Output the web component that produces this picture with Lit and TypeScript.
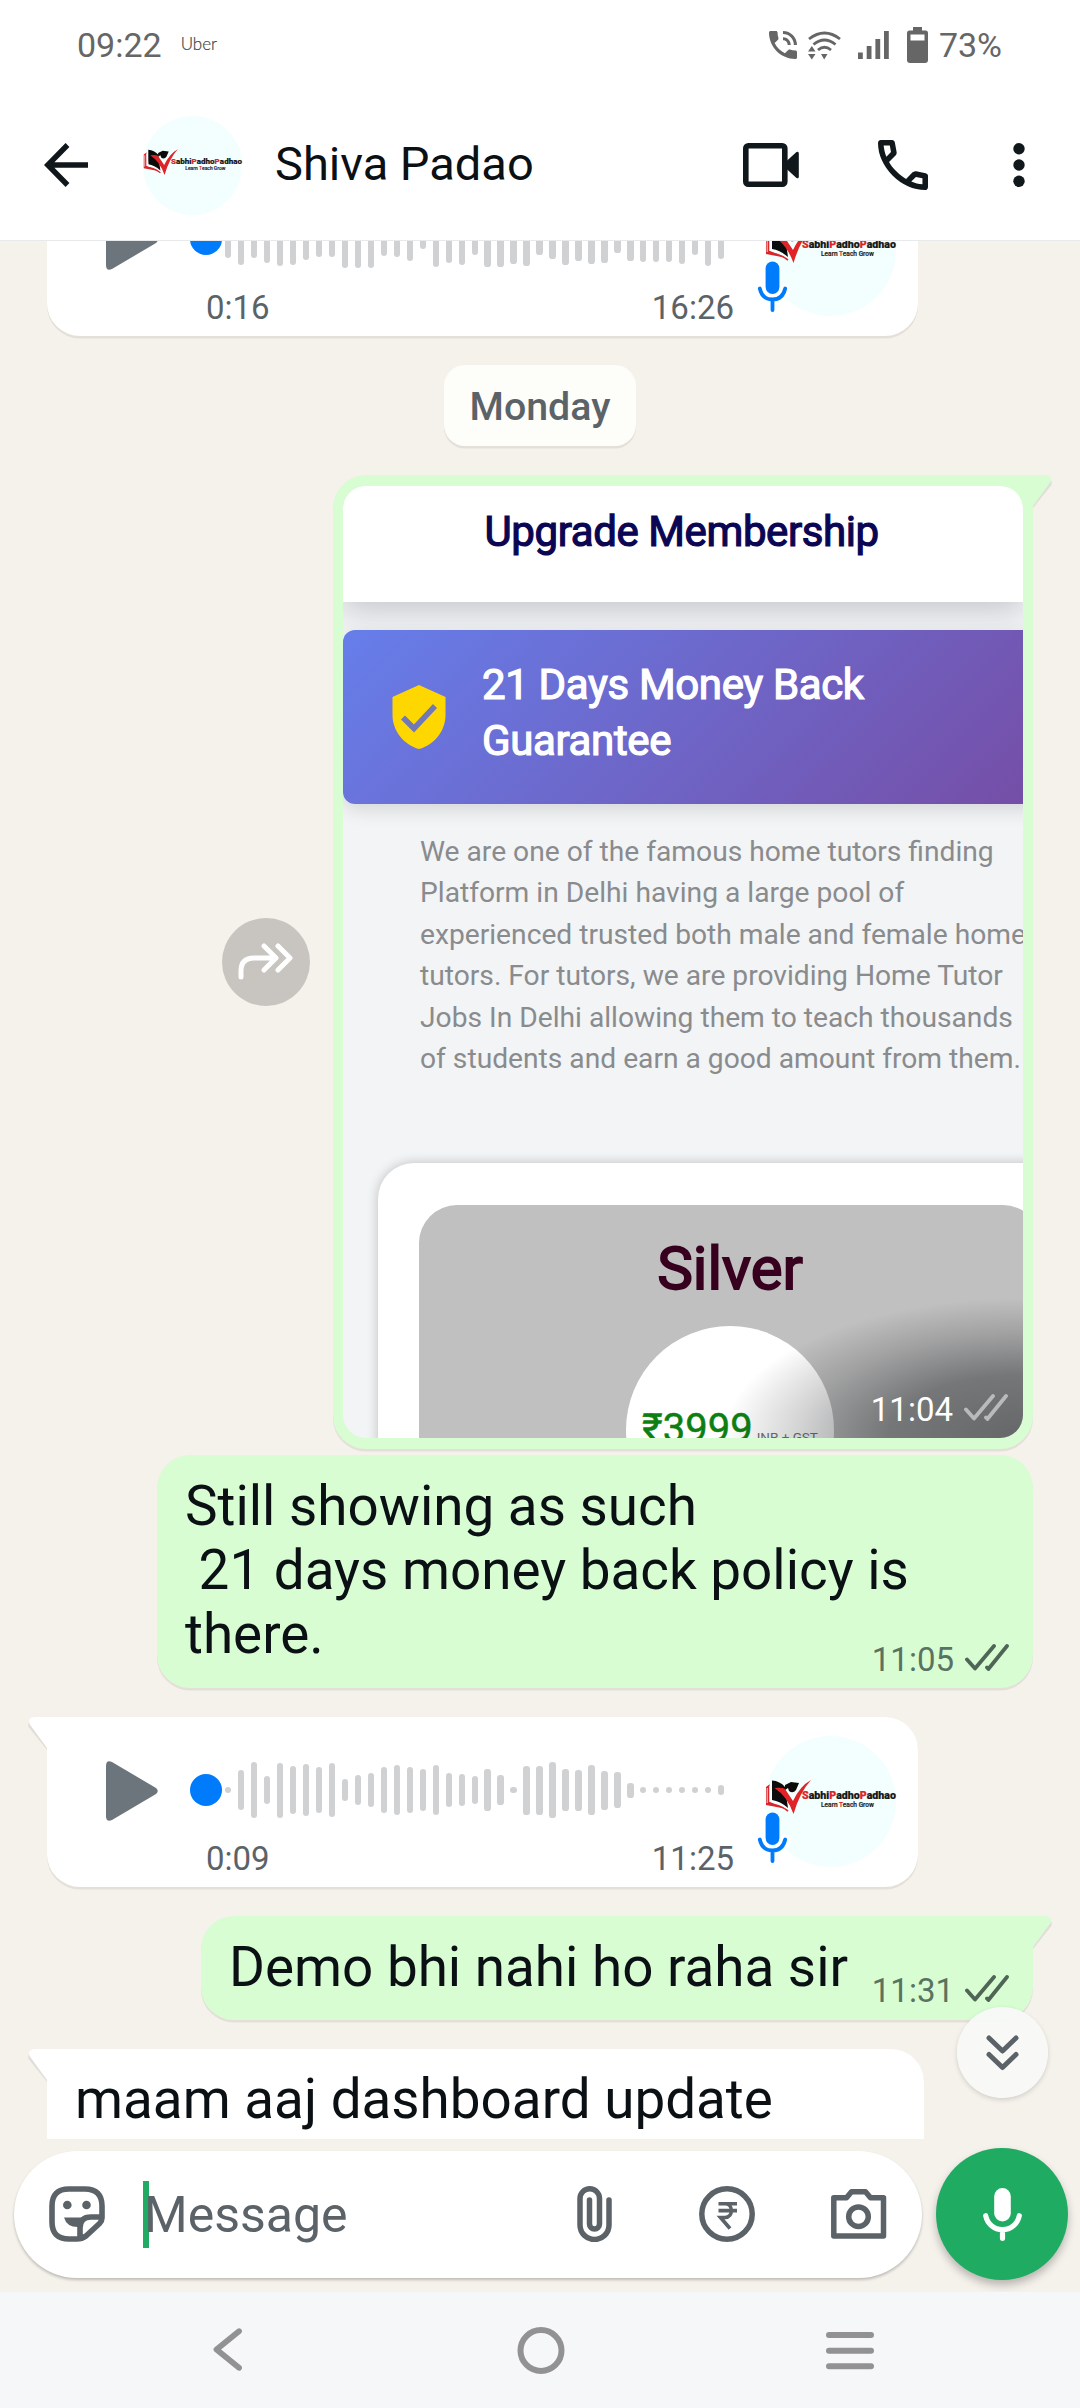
import { LitElement, html, css, svg } from "lit";
import { customElement, property } from "lit/decorators.js";

const DEMO_WAVE = [38, 51, 38, 48, 54, 51, 41, 36, 35, 58, 58, 58, 34, 36, 44, 20, 56, 48, 52, 32, 56, 56, 49, 54, 32, 40, 52, 44, 50, 47, 27, 44, 46, 46, 46, 50, 32, 53, 40];
const REPLY_WAVE = [6, 40, 56, 28, 55, 48, 52, 46, 54, 22, 30, 34, 46, 50, 46, 42, 50, 34, 32, 28, 42, 30, 6, 49, 49, 56, 42, 41, 50, 39, 36, 15, 6, 6, 6, 6, 6, 6, 10];

@customElement("brand-avatar")
export class BrandAvatar extends LitElement {
  static styles = css`
    :host { display: block; }
    .logo { display: block; width: 100%; height: 100%; overflow: visible; }
    .brand { font: 900 10.2px Roboto, "Liberation Sans", sans-serif; fill: #161616; stroke: #161616; stroke-width: 0.2px; }
    .brand .hot { fill: #e02327; stroke: #e02327; }
    .motto { font: 500 7px Roboto, "Liberation Sans", sans-serif; fill: #222; stroke: #222; stroke-width: 0.2px; }
    .motto .hot { fill: #e02327; stroke: #e02327; }
  `;
  render() {
    return html`<svg class="logo" viewBox="0 0 131 131">
      <circle cx="65.5" cy="65.5" r="65.5" fill="#f2fffe" />
      <path d="M1 51 L5 48 V66 L22 73 L1 69 Z" fill="#d9262b" />
      <path d="M2.2 52 V67 M4.6 50 V66" stroke="#fff" stroke-width="0.8" />
      <path d="M7 44.5 Q15 45 20 51 L23 72 Q15 65 7 64 Z" fill="#0b0b0b" />
      <path d="M5 48 L6.6 65 Q15 66.5 23 74" fill="none" stroke="#fff" stroke-width="1" />
      <path d="M3 68 Q14 68 23 75" fill="none" stroke="#d9262b" stroke-width="1.6" />
      <path d="M20 49 L26 46 L34 47 L31 54 Q28 58 24 55 L23 52 L20 54 Z" fill="#0b0b0b" />
      <path d="M9.5 52 Q17 51 20 53 L28 65 Q35 50 46 44 Q35 56 28.5 78 Q22 60 9.5 52 Z" fill="#e02327" />
      <text class="brand" x="37" y="63.3" textLength="94" lengthAdjust="spacingAndGlyphs"><tspan class="hot">S</tspan>abhi<tspan class="hot">P</tspan>adho<tspan class="hot">P</tspan>adhao</text>
      <text class="motto" x="56" y="71" textLength="53" lengthAdjust="spacingAndGlyphs">Learn <tspan class="hot">T</tspan>each Grow</text>
    </svg>`;
  }
}

@customElement("read-ticks")
export class ReadTicks extends LitElement {
  static styles = css`
    :host { display: block; width: 44px; height: 27px; }
    .ticks { display: block; fill: none; stroke: currentColor; stroke-width: 3.8; stroke-linecap: round; stroke-linejoin: round; }
  `;
  render() {
    return html`<svg class="ticks" width="44" height="27" viewBox="0 0 44 27">
      <path d="M2 15.5 L10 24.5 L29 2 M22 23.5 L23.4 25 L42 2" />
    </svg>`;
  }
}

@customElement("voice-note")
export class VoiceNote extends LitElement {
  @property() length = "";
  @property() time = "";
  @property({ attribute: false }) wave: number[] = [];

  static styles = css`
    :host { display: block; width: 871px; height: 170px; color: #5b6368; font: 400 33px/38px Roboto, "Liberation Sans", sans-serif; }
    .note { display: flex; height: 170px; }
    .play { margin: 44px 0 0 59px; width: 52px; height: 60px; }
    .track { width: 535px; margin-left: 32px; }
    .line { display: flex; align-items: center; gap: 6.8px; height: 60px; padding-top: 43px; }
    .knob { width: 32px; height: 32px; border-radius: 50%; background: #007bfc; margin-right: -4px; }
    .bar { width: 6.2px; border-radius: 3.1px; background: #cfd1d3; }
    .times { display: flex; justify-content: space-between; padding: 20px 0 0 16px; width: 544px; box-sizing: border-box; }
    .who { position: relative; width: 131px; height: 131px; margin: 19px 0 0 40px; }
    .mic { position: absolute; left: -11px; top: 72px; overflow: visible; }
  `;
  render() {
    return html`<div class="note">
      <svg class="play" viewBox="0 0 52 60"><path d="M0 5 Q0 -1.5 6 1 L50 27 Q53.500 30 50 33 L6 59 Q0 61.500 0 55 Z" fill="#6b757b" /></svg>
      <div class="track">
        <div class="line">
          <span class="knob"></span>
          ${this.wave.map((h) => html`<span class="bar" style="height:${h}px"></span>`)}
        </div>
        <div class="times"><span>${this.length}</span><span>${this.time}</span></div>
      </div>
      <div class="who">
        <brand-avatar></brand-avatar>
        <svg class="mic" width="37" height="59" viewBox="-4 -4 37 59">
          <g fill="none" stroke="#fff" stroke-linecap="round" stroke-width="11">
            <path d="M14.500 10 V26 M1.800 28 C3.500 35 8.500 38.500 14.500 38.500 S25.500 35 27.200 28 M14.500 40 V49" />
          </g>
          <rect x="7.600" y="0.500" width="13.800" height="32.500" rx="6.900" fill="#007bfc" />
          <path d="M1.800 27.500 C3.500 35 8.500 38.500 14.500 38.500 S25.500 35 27.200 27.500 M14.500 39 V49" fill="none" stroke="#007bfc" stroke-width="3.800" stroke-linecap="round" />
        </svg>
      </div>
    </div>`;
  }
}

@customElement("membership-shot")
export class MembershipShot extends LitElement {
  static styles = css`
    :host { display: block; width: 680px; height: 952px; border-radius: 23px; overflow: hidden; position: relative; background: #f2f4f6; font-family: Roboto, "Liberation Sans", sans-serif; }
    .title { position: relative; height: 116px; box-sizing: border-box; padding: 18.500px 0 0 141.500px; background: #fff; color: #0b0654; font-size: 42px; letter-spacing: -0.4px; line-height: 56px; white-space: nowrap; -webkit-text-stroke: 1.2px #0b0654; box-shadow: 0 8px 30px rgba(60, 65, 70, 0.25); }
    .banner { position: relative; display: flex; align-items: center; width: 740px; height: 174px; margin-top: 28px; box-sizing: border-box; border-radius: 12px; padding: 0 0 0 49px; background: linear-gradient(135deg, #667eea 0%, #764ba2 100%); box-shadow: 0 6px 18px rgba(0, 0, 0, 0.12); color: #fff; }
    .shield { width: 54px; height: 66px; margin: 0 36px 0 0; }
    .promise { font-size: 42px; letter-spacing: -0.35px; line-height: 55.500px; -webkit-text-stroke: 1.2px #fff; white-space: pre; margin-top: -8px; }
    .copy { margin: 27px 0 0 77px; color: #898b8d; font-size: 28.200px; line-height: 41.600px; white-space: pre; }
    .plan { width: 740px; height: 500px; margin: 83px 0 0 35px; box-sizing: border-box; padding: 42px 0 0 41px; border-radius: 36px; background: #fff; box-shadow: 0 0 12px rgba(0, 0, 0, 0.22); }
    .tier { display: flex; flex-direction: column; align-items: center; width: 622px; height: 440px; border-radius: 38px; background: #c0c0c0; }
    .name { margin-top: 28px; color: #38001f; font-size: 60px; line-height: 72px; -webkit-text-stroke: 1.800px #38001f; }
    .price { display: flex; justify-content: center; align-items: baseline; gap: 4px; width: 208px; height: 208px; box-sizing: border-box; margin-top: 21px; padding-top: 78px; border-radius: 50%; background: #fff; color: #0d7f12; font-size: 40px; line-height: 50px; -webkit-text-stroke: 0.500px #0d7f12; white-space: nowrap; }
    .tax { color: #6f6f6f; font-size: 13.500px; -webkit-text-stroke: 0; }
    .scrim { position: absolute; right: 0; bottom: 0; width: 400px; height: 170px; background: radial-gradient(ellipse 300px 140px at 100% 100%, rgba(35, 38, 40, 0.58) 0%, rgba(35, 38, 40, 0.48) 45%, rgba(35, 38, 40, 0.2) 75%, rgba(35, 38, 40, 0) 100%); }
    .meta { position: absolute; right: 15px; bottom: 9px; display: flex; align-items: center; gap: 11px; color: #fff; font-size: 33px; line-height: 38px; }
    .ticks { color: #b9babb; margin-top: -4px; }
  `;
  render() {
    return html`
      <div class="title">Upgrade Membership</div>
      <div class="banner">
        <svg class="shield" viewBox="0 0 54 66">
          <path d="M27 1 L53.500 13 V31 C53.500 47 42 61 27 65 C12 61 0.500 47 0.500 31 V13 Z" fill="#ffd700" />
          <path d="M11 33.500 L22 44.500 L43 22" fill="none" stroke="#7078b8" stroke-width="5.500" />
        </svg>
        <div class="promise">21 Days Money Back
Guarantee</div>
      </div>
      <div class="copy">We are one of the famous home tutors finding
Platform in Delhi having a large pool of
experienced trusted both male and female home
tutors. For tutors, we are providing Home Tutor
Jobs In Delhi allowing them to teach thousands
of students and earn a good amount from them.</div>
      <div class="plan">
        <div class="tier">
          <div class="name">Silver</div>
          <div class="price"><span>₹3999</span><span class="tax">INR + GST</span></div>
        </div>
      </div>
      <div class="scrim"></div>
      <div class="meta"><span>11:04</span><read-ticks class="ticks"></read-ticks></div>
    `;
  }
}

const tail = (side: "left" | "right") => html`<svg class="tail ${side}" width="22" height="34" viewBox="0 0 22 34">
  ${side === "right"
    ? svg`<path d="M2 2.500 H14 Q22 2.500 20.500 10 L2 33 Z" fill="#00000014" /><path d="M0 0 H14 Q21.500 0 19.500 7 L2 31 H0 Z" fill="currentColor" />`
    : svg`<path d="M20 2.500 H8 Q0 2.500 1.500 10 L20 33 Z" fill="#00000014" /><path d="M22 0 H8 Q0.500 0 2.500 7 L20 31 H22 Z" fill="currentColor" />`}
</svg>`;

@customElement("app-root")
export class AppRoot extends LitElement {
  static styles = css`
    :host { display: flex; flex-direction: column; width: 1080px; height: 2408px; overflow: hidden; background: #f5f1eb; font-family: Roboto, "Liberation Sans", sans-serif; color: #0a1014; }
    .status { display: flex; align-items: center; height: 90px; box-sizing: border-box; padding: 0 78px 0 77px; background: #fff; color: #666; font-size: 34px; line-height: 40px; }
    .carrier { margin: -2px auto 0 19px; font: 300 17px/20px Lato, Roboto, sans-serif; color: #444; -webkit-text-stroke: 0.2px #444; }
    .s-call { margin-right: 11px; }
    .s-wifi { margin-right: 17px; }
    .s-bars { margin-right: 18px; }
    .s-batt { margin-right: 11px; }
    .header { display: flex; align-items: center; height: 151px; box-sizing: border-box; padding-left: 44px; background: #fff; border-bottom: 1px solid #e8e9ea; }
    .face { width: 99px; height: 99px; margin: 0 33px 0 55px; }
    .contact { font-size: 47px; line-height: 60px; margin-right: auto; margin-top: -2px; }
    .video { margin-right: 79px; }
    .phone { margin-right: 85px; }
    .more { margin-right: 55px; }
    .chat { position: relative; height: 1898px; overflow: hidden; }
    .list { display: flex; flex-direction: column; gap: 29px; margin-top: -75px; padding: 0 47px; }
    .bubble { position: relative; box-sizing: border-box; border-radius: 33px; background: #fff; box-shadow: 0 2.500px 0 #e4e0d9; }
    .in { align-self: flex-start; color: #fff; }
    .out { align-self: flex-end; background: #d8fdd3; color: #d8fdd3; }
    .flat-left { border-top-left-radius: 0; }
    .flat-right { border-top-right-radius: 0; }
    .tail { position: absolute; top: 0; }
    .tail.left { left: -20px; }
    .tail.right { right: -20px; }
    .day { align-self: center; height: 81px; box-sizing: border-box; padding: 0 25.500px; border-radius: 21px; background: #fdfdfa; box-shadow: 0 2.500px 0 #e4e0d9; color: #5b6368; font-size: 39.300px; font-weight: 500; line-height: 85px; }
    .group { display: flex; flex-direction: column; gap: 6px; }
    .shared { display: flex; justify-content: flex-end; align-items: center; gap: 23px; }
    .forward { display: block; }
    .media { width: 700px; height: 974px; padding: 10.500px 10px; }
    .text { color: #0a1014; font-size: 54.800px; line-height: 64px; white-space: pre; }
    .stamp { display: flex; align-items: center; gap: 11px; height: 38px; color: #55705a; font-size: 33px; line-height: 38px; }
    .stamp-time { color: #5a7360; }
    .tick { color: #4f6657; margin-top: -5px; }
    .policy { width: 876px; height: 233px; padding: 19px 24px 0 28px; }
    .row { display: flex; justify-content: space-between; align-items: flex-start; }
    .policy .stamp { margin-top: 39px; }
    .demo { display: flex; width: 832px; height: 104px; padding: 19px 24px 0 28px; justify-content: space-between; }
    .demo .stamp { margin-top: 37px; }
    .last { width: 877px; height: 160px; padding: 18px 28px; }
    .jump { position: absolute; left: 957px; top: 1766px; width: 91px; height: 91px; border-radius: 50%; background: #f8f9f8f2; box-shadow: 0 2px 5px rgba(0, 0, 0, 0.14); display: flex; align-items: center; justify-content: center; }
    .composer { display: flex; align-items: center; gap: 14px; height: 153px; box-sizing: border-box; padding: 0 12px 3px 14px; }
    .field { display: flex; align-items: center; width: 908px; height: 127px; box-sizing: border-box; padding-left: 35px; border-radius: 64px; background: #fff; box-shadow: 0 2px 3px rgba(0, 0, 0, 0.22); color: #5b6368; }
    .caret { width: 6px; height: 67px; margin: 0 -6px 0 38px; background: #1fab61; }
    .hint { margin: 2px auto 0 1px; font-size: 50px; line-height: 60px; }
    .clip { margin-right: 87px; }
    .pay { margin-right: 76px; }
    .cam { margin-right: 35px; }
    .talk { display: flex; justify-content: center; align-items: center; width: 132px; height: 132px; border-radius: 50%; background: #1fab61; box-shadow: 0 5px 9px rgba(0, 0, 0, 0.25); }
    .nav { display: flex; flex: 1; background: #f6f7f9; padding: 35px 206px 0 213px; justify-content: space-between; align-items: flex-start; }
    .nav-back { margin-top: 1px; }
    .nav-home { margin-left: 12px; }
    .nav-menu { margin-top: 5px; }
    svg { display: block; flex: none; }
  `;

  render() {
    return html`
      <div class="status">
        <span>09:22</span><span class="carrier">Uber</span>
        <svg class="s-call" width="28" height="28" viewBox="3 3 18 18" fill="#666"><path d="M20 15.500c-1.250 0-2.450-.2-3.570-.57-.35-.11-.74-.03-1.020.24l-2.200 2.200c-2.830-1.440-5.150-3.750-6.590-6.590l2.200-2.210c.28-.26.36-.65.25-1C8.700 6.450 8.500 5.250 8.500 4c0-.55-.45-1-1-1H4c-.55 0-1 .45-1 1 0 9.390 7.610 17 17 17 .55 0 1-.45 1-1v-3.500c0-.55-.45-1-1-1zM19 12h2c0-4.970-4.030-9-9-9v2c3.870 0 7 3.130 7 7zm-4 0h2c0-2.760-2.240-5-5-5v2c1.660 0 3 1.340 3 3z" /></svg>
        <svg class="s-wifi" width="33" height="29" viewBox="0 0 33 29" fill="none" stroke="#666" stroke-width="2.800">
          <path d="M1 8 Q16.500 -4 32 8 M5.500 13.500 Q16.500 4.500 27.500 13.500 M10 19 Q16.500 13.500 23 19" />
          <path d="M13 23 H19.500 L16.200 28.500 Z M0 20.500 H7.500 L3.800 15 Z M0 23 H7.500 L3.800 28.500 Z" fill="#666" stroke="none" />
        </svg>
        <svg class="s-bars" width="31" height="28" viewBox="0 0 31 28" fill="#666"><path d="M0 21.500h4.800V28H0zM8.700 15h4.800v13H8.700zM17.400 8h4.800v20h-4.800zM26 0h4.800v28H26z" /></svg>
        <svg class="s-batt" width="21" height="36" viewBox="0 0 21 36" fill="#666"><path fill-rule="evenodd" d="M6 0H15V3.500H18.500Q21 3.500 21 6V33Q21 36 18 36H3Q0 36 0 33V6Q0 3.500 2.500 3.500H6ZM3.500 7.500V13.500H17.500V7.500Z" /></svg>
        <span>73%</span>
      </div>

      <div class="header">
        <svg width="44" height="44" viewBox="0 0 44 44" fill="none" stroke="#0f171b" stroke-width="5.400"><path d="M23.500 2 L3.800 22 L23.500 42 M3.800 22 H44" /></svg>
        <brand-avatar class="face"></brand-avatar>
        <span class="contact">Shiva Padao</span>
        <svg class="video" width="56" height="44" viewBox="0 0 56 44"><rect x="2.800" y="2.800" width="39" height="38.400" rx="2.500" fill="none" stroke="#10181c" stroke-width="5.600" /><path d="M42 19.500 L53.500 9 Q55.800 7.800 55.800 10.500 V33.500 Q55.800 36.200 53.500 35 L42 24.500 Z" fill="#10181c" /></svg>
        <svg class="phone" width="50" height="50" viewBox="120 -840 720 720" fill="#10181c"><path d="M798-120q-125 0-247-54.500T329-329Q229-429 174.500-551T120-798q0-18 12-30t30-12h162q14 0 25 9.500t13 22.500l26 140q2 16-1 27t-11 19l-97 98q20 37 47.500 71.500T387-386q31 31 65 57.500t72 48.500l94-94q9-9 23.500-13.500T670-390l138 28q14 4 23 14.500t9 23.500v162q0 18-12 30t-30 12ZM241-600l66-66-17-94h-89q5 41 14 81t26 79Zm358 358q39 17 79.500 27t81.500 13v-88l-94-19-67 67Z" /></svg>
        <svg class="more" width="12" height="44" viewBox="0 0 12 44" fill="#10181c"><circle cx="6" cy="5.700" r="5.700" /><circle cx="6" cy="22" r="5.700" /><circle cx="6" cy="38.300" r="5.700" /></svg>
      </div>

      <div class="chat">
        <div class="list">
          <div class="bubble in"><voice-note length="0:16" time="16:26" .wave=${DEMO_WAVE}></voice-note></div>
          <div class="day">Monday</div>
          <div class="group">
            <div class="shared">
              <svg class="forward" width="88" height="88" viewBox="0 0 88 88">
                <circle cx="44" cy="44" r="44" fill="#c8c5c0" />
                <path d="M19 59 V53 Q19 40 32 40 H53 M42 28 L54 40 L42 52 M56 28 L68 40 L56 52" fill="none" stroke="#fff" stroke-width="5" stroke-linecap="round" stroke-linejoin="round" />
              </svg>
              <div class="bubble out media flat-right">${tail("right")}<membership-shot></membership-shot></div>
            </div>
            <div class="bubble out policy">
              <div class="text">Still showing as such
 21 days money back policy is</div>
              <div class="row">
                <div class="text">there.</div>
                <div class="stamp"><span class="stamp-time">11:05</span><read-ticks class="tick"></read-ticks></div>
              </div>
            </div>
          </div>
          <div class="bubble in flat-left">${tail("left")}<voice-note length="0:09" time="11:25" .wave=${REPLY_WAVE}></voice-note></div>
          <div class="bubble out demo flat-right">${tail("right")}
            <div class="text">Demo bhi nahi ho raha sir</div>
            <div class="stamp"><span class="stamp-time">11:31</span><read-ticks class="tick"></read-ticks></div>
          </div>
          <div class="bubble in last flat-left">${tail("left")}<div class="text">maam aaj dashboard update</div></div>
        </div>
        <div class="jump"><svg width="33" height="36" viewBox="0 0 33 36" fill="none" stroke="#5b6368" stroke-width="5" stroke-linecap="round" stroke-linejoin="round"><path d="M3 3 L16.500 16 L30 3 M3 19.500 L16.500 32.500 L30 19.500" /></svg></div>
      </div>

      <div class="composer">
        <div class="field">
          <svg width="56" height="56" viewBox="0 0 56 56" fill="none" stroke="#5b6368" stroke-width="5.600" stroke-linejoin="round">
            <path d="M20 3 H36 Q53 3 53 20 V32 Q53 35 50.500 37.500 L37 50 Q33 53 28 53 H20 Q3 53 3 36 V20 Q3 3 20 3 Z M53 31 H42 Q31 31 31 42 V52" />
            <circle cx="18.300" cy="19" r="4.300" fill="#5b6368" stroke="none" /><circle cx="37.500" cy="19" r="4.300" fill="#5b6368" stroke="none" />
            <path d="M15 31.500 H36 L31 41 Q18 42 15 31.500 Z" fill="#5b6368" stroke="none" />
          </svg>
          <span class="caret"></span>
          <span class="hint">Message</span>
          <svg class="clip" width="35" height="56" viewBox="0 0 35 56" fill="none" stroke="#5b6368" stroke-width="5.500" stroke-linecap="round"><path d="M32 14 V39 A14.500 14.500 0 0 1 3 39 V12.500 A9.750 9.750 0 0 1 22.500 12.500 V38 A5 5 0 0 1 12.500 38 V14" /></svg>
          <svg class="pay" width="56" height="56" viewBox="0 0 56 56" fill="none" stroke="#5b6368"><circle cx="28" cy="28" r="25.200" stroke-width="5.500" /><path d="M19.500 17.700 H38 M19.500 24.600 H38 M20.500 17.700 H26 C34.500 17.700 34.500 31.500 26 31.500 H21.500 L31 42.500" stroke-width="3.600" /></svg>
          <svg class="cam" width="56" height="50" viewBox="0 0 56 50" fill="none" stroke="#5b6368" stroke-width="5.500" stroke-linejoin="round"><path d="M2.800 8.700 H15.500 L20.500 2.800 H34.500 L39.500 8.700 H52.500 V47 H2.800 Z" /><circle cx="27.500" cy="27.700" r="9.800" /></svg>
        </div>
        <div class="talk"><svg width="39" height="53" viewBox="0 0 39 53"><rect x="11.200" y="0" width="16.600" height="33.500" rx="8.300" fill="#fff" /><path d="M2.700 27.700 C4.500 36 11 41.700 19.500 41.700 S34.500 36 36.300 27.700 M19.500 42 V50.300" fill="none" stroke="#fff" stroke-width="5.200" stroke-linecap="round" /></svg></div>
      </div>

      <div class="nav">
        <svg class="nav-back" width="30" height="43" viewBox="0 0 30 43" fill="none" stroke="#929294" stroke-width="5.800" stroke-linecap="round" stroke-linejoin="round"><path d="M26 3.200 L3.500 21.500 L26 39.800" /></svg>
        <svg class="nav-home" width="48" height="47" viewBox="0 0 48 47" fill="none" stroke="#929294" stroke-width="6"><circle cx="24" cy="23.500" r="20.500" /></svg>
        <svg class="nav-menu" width="48" height="38" viewBox="0 0 48 38" stroke="#929294" stroke-width="6" stroke-linecap="round"><path d="M3 3 H45 M3 18.700 H45 M3 34.300 H45" /></svg>
      </div>
    `;
  }
}
